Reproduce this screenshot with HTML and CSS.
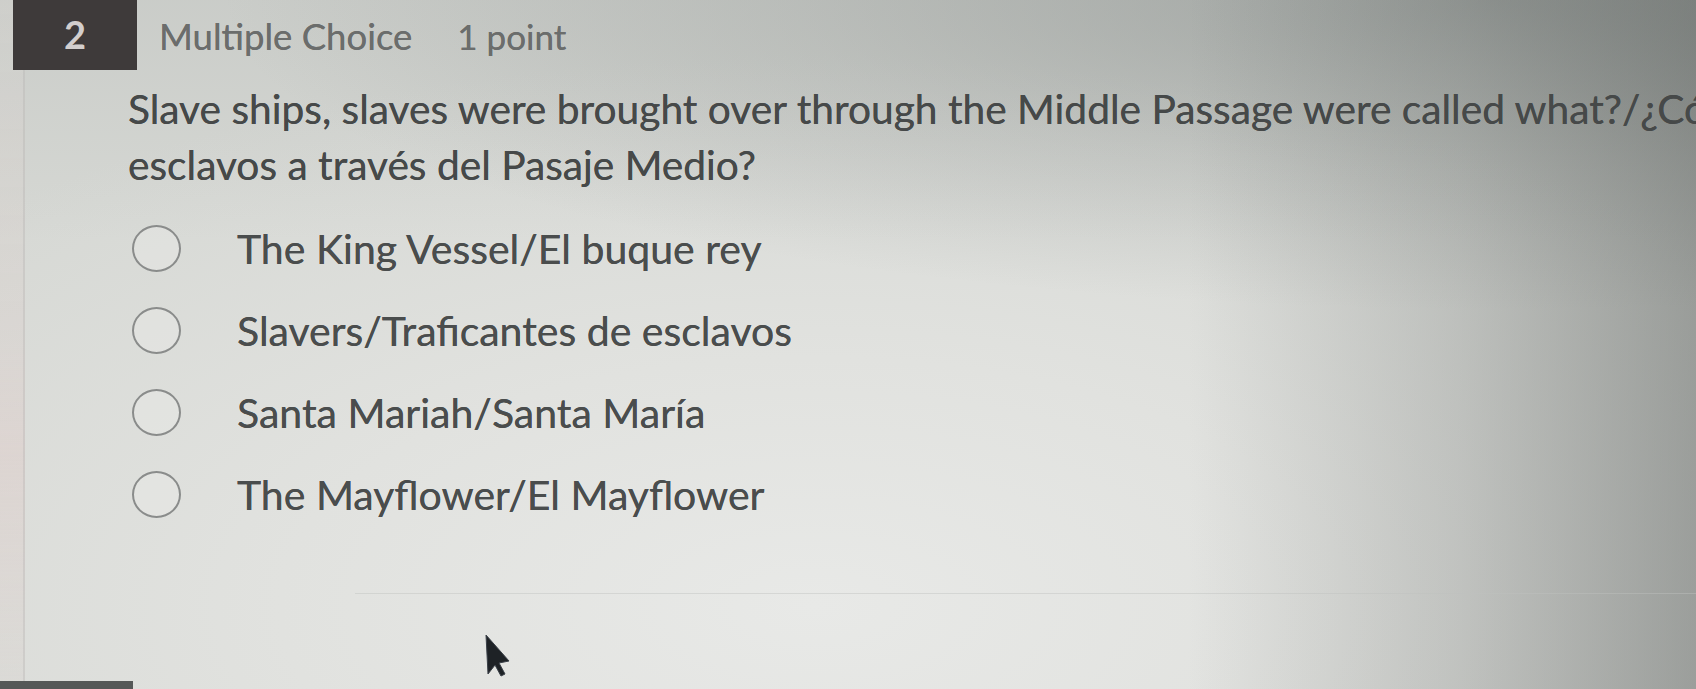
FILE: index.html
```html
<!DOCTYPE html>
<html lang="en">
<head>
<meta charset="utf-8">
<title>Multiple Choice</title>
<link rel="stylesheet" href="styles.css">
</head>
<body>
<div class="page">
  <div class="edge"></div>
  <div class="content">
    <header class="qhead">
      <div class="qnum">2</div>
      <div class="qtype">Multiple Choice</div>
      <div class="qpoints">1 point</div>
    </header>
    <div class="question">
      <div class="qline">Slave ships, slaves were brought over through the Middle Passage were called what?/¿Cómo se llamaban los barcos de</div>
      <div class="qline">esclavos a través del Pasaje Medio?</div>
    </div>
    <ul class="options">
      <li class="option"><span class="radio"></span><span class="label">The King Vessel/El buque rey</span></li>
      <li class="option"><span class="radio"></span><span class="label">Slavers/Traficantes de esclavos</span></li>
      <li class="option"><span class="radio"></span><span class="label">Santa Mariah/Santa María</span></li>
      <li class="option"><span class="radio"></span><span class="label">The Mayflower/El Mayflower</span></li>
    </ul>
    <div class="divider"></div>
    <div class="footer-bar"></div>
  </div>
  <svg class="cursor" width="26" height="44" viewBox="0 0 26 44" aria-hidden="true">
    <path d="M2 1 L4 40 L11 31 L17 42 L21 40 L15 29 L25 27 Z" fill="#1e2226" stroke="#3a4048" stroke-width="1" stroke-linejoin="round"/>
  </svg>
</div>
</body>
</html>
```
FILE: styles.css
```css
html, body {
  margin: 0;
  padding: 0;
}
body {
  width: 1696px;
  height: 689px;
  overflow: hidden;
  font-family: Lato, "Open Sans", "Liberation Sans", sans-serif;
  background:
    linear-gradient(to right, rgba(70,75,73,0) 0%, rgba(70,75,73,0) 70%, rgba(70,75,73,0.20) 86%, rgba(60,65,63,0.40) 100%),
    radial-gradient(ellipse 75% 45% at 88% 0%, rgba(95,102,100,0.40) 0%, rgba(110,116,114,0.18) 55%, rgba(130,135,133,0) 100%),
    linear-gradient(to bottom, rgba(140,145,143,0.16) 0%, rgba(150,155,153,0) 35%),
    radial-gradient(ellipse 70% 80% at 48% 88%, #e8e9e7 0%, #e1e2df 45%, #d6d8d4 100%);
}
.page {
  position: relative;
  width: 1696px;
  height: 689px;
  display: flex;
}
.edge {
  width: 23px;
  flex: none;
  background: linear-gradient(to bottom, rgba(215,212,208,0.3) 0%, rgba(218,205,202,0.35) 50%, rgba(222,206,203,0.55) 65%, rgba(215,210,206,0.3) 100%);
  border-right: 2px solid rgba(160,160,158,0.22);
}
.content {
  flex: 1;
  display: flex;
  flex-direction: column;
  min-width: 0;
}
.qhead {
  display: flex;
  align-items: center;
  height: 70px;
}
.qnum {
  width: 124px;
  height: 70px;
  margin-left: -12px;
  background: #3e3a3a;
  color: #d2cecd;
  font-family: Lato, "Liberation Sans", sans-serif;
  font-weight: bold;
  font-size: 38px;
  display: flex;
  align-items: center;
  justify-content: center;
  padding-bottom: 2px;
  box-sizing: border-box;
}
.qtype, .qpoints {
  color: #6b6d6c;
  margin-top: 2px;
  text-shadow: 0 0 0.5px currentColor;
}
.qtype {
  font-size: 36.5px;
  margin-left: 22px;
}
.qpoints {
  font-size: 35px;
  margin-left: 45px;
}
.question {
  margin-top: 11px;
  padding-left: 103px;
  font-size: 40.7px;
  line-height: 56px;
  color: #464949;
  white-space: nowrap;
  overflow: hidden;
  text-shadow: 0 0 0.6px currentColor;
}
.options {
  list-style: none;
  margin: 14px 0 0 0;
  padding: 0 0 0 107px;
}
.option {
  display: flex;
  align-items: center;
  height: 82px;
}
.radio {
  width: 45px;
  height: 43px;
  border: 2px solid #8a8c8b;
  border-radius: 50%;
  flex: none;
  background: rgba(235,236,233,0.4);
}
.label {
  margin-left: 56px;
  font-size: 41px;
  color: #4a4d4d;
  white-space: nowrap;
  text-shadow: 0 0 0.6px currentColor;
}
.divider {
  margin-top: 58px;
  margin-left: 330px;
  height: 1px;
  background: rgba(190,192,190,0.45);
}
.footer-bar {
  margin-top: auto;
  width: 133px;
  margin-left: -25px;
  height: 8px;
  background: #555857;
}
.cursor {
  position: absolute;
  left: 484px;
  top: 634px;
}
```
